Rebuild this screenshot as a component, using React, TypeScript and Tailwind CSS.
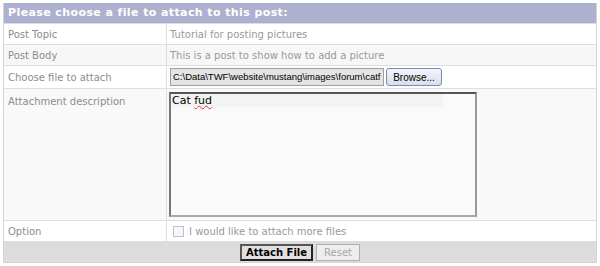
import React from "react";

const font = { fontFamily: '"DejaVu Sans", Verdana, sans-serif' };

function Row({ label, bg, h, children }: { label: string; bg: string; h: string; children?: React.ReactNode }) {
  return (
    <div className={`flex border-t border-[#dedede] ${bg} ${h}`}>
      <div className="w-[163px] shrink-0 border-r border-[#dedede] pl-[4px] flex items-center text-[10px] text-[#8c8c8c]">
        {label}
      </div>
      <div className="flex-1 pl-[3px] flex items-center text-[10px] text-[#999999]">
        {children}
      </div>
    </div>
  );
}

export default function App() {
  return (
    <div className="w-[600px] h-[266px] bg-white pt-[3px] pl-[3px]" style={font}>
      <div className="w-[594px] border-x border-b border-[#d4d4d4]">
        <div className="h-[20px] bg-[#aeb0d0] text-white font-bold text-[11px] tracking-[0.4px] pl-[4px] flex items-center">
          Please choose a file to attach to this post:
        </div>
        <Row label="Post Topic" bg="bg-white" h="h-[21px]">
          <span>Tutorial for posting pictures</span>
        </Row>
        <Row label="Post Body" bg="bg-[#f7f7f7]" h="h-[21px]">
          <span>This is a post to show how to add a picture</span>
        </Row>
        <Row label="Choose file to attach" bg="bg-white" h="h-[23px]">
          <div className="flex items-center gap-[2px]">
            <div
              className="w-[214px] h-[18px] border border-[#a0a0a0] bg-[#e4e4e4] text-black text-[9.5px] pl-[2px] flex items-center overflow-hidden whitespace-nowrap"
              style={{ fontFamily: '"Liberation Sans", Arial, sans-serif' }}
            >
              <span className="w-[208px] overflow-hidden">C:\Data\TWF\website\mustang\images\forum\catf</span>
            </div>
            <div
              className="w-[56px] h-[18px] rounded-[3px] border border-[#6f8fb8] bg-gradient-to-b from-[#f4f6fa] to-[#d8dfe9] text-black text-[10px] flex items-center justify-center"
              style={{ fontFamily: '"Liberation Sans", Arial, sans-serif' }}
            >
              Browse...
            </div>
          </div>
        </Row>
        <div className="flex border-t border-[#dedede] bg-[#f9f9f9] h-[132px]">
          <div className="w-[163px] shrink-0 border-r border-[#dedede] pl-[4px] pt-[5px] text-[10px] text-[#8c8c8c]">
            Attachment description
          </div>
          <div className="flex-1 pl-[2px] pt-[3px]">
            <div className="w-[308px] h-[125px] border-2 border-t-[#555] border-l-[#777] border-r-[#999] border-b-[#aaa] bg-[#fafafa] relative">
              <div className="absolute left-0 top-0 w-[272px] h-[13px] bg-[#f3f3f3]" />
              <div
                className="relative pl-[1px] text-[11px] text-black leading-[14px]"
                style={{ fontFamily: '"DejaVu Sans", Tahoma, sans-serif' }}
              >
                Cat{" "}
                <span className="underline decoration-wavy decoration-[#e03030] decoration-[1px]">fud</span>
              </div>
            </div>
          </div>
        </div>
        <div className="flex border-t border-[#dedede] bg-white h-[21px]">
          <div className="w-[163px] shrink-0 border-r border-[#dedede] pl-[4px] flex items-center text-[10px] text-[#8c8c8c]">
            Option
          </div>
          <div className="flex-1 pl-[6px] flex items-center gap-[5px] text-[10px] text-[#999999]">
            <div className="w-[11px] h-[11px] border border-[#b8c4d4] bg-[#f4f6f8]" />
            <span>I would like to attach more files</span>
          </div>
        </div>
        <div className="h-[21px] border-t border-[#dedede] bg-[#dcdcdc] flex items-center justify-center gap-[3px]">
          <div className="h-[17px] w-[73px] border-2 border-t-[#555] border-l-[#555] border-r-[#222] border-b-[#222] bg-[#e0e0e0] text-[10px] font-bold text-black flex items-center justify-center">
            Attach File
          </div>
          <div className="h-[17px] w-[44px] border border-[#b0b0b0] bg-[#eeeeee] text-[10px] text-[#a8a8a8] flex items-center justify-center">
            Reset
          </div>
        </div>
      </div>
    </div>
  );
}
